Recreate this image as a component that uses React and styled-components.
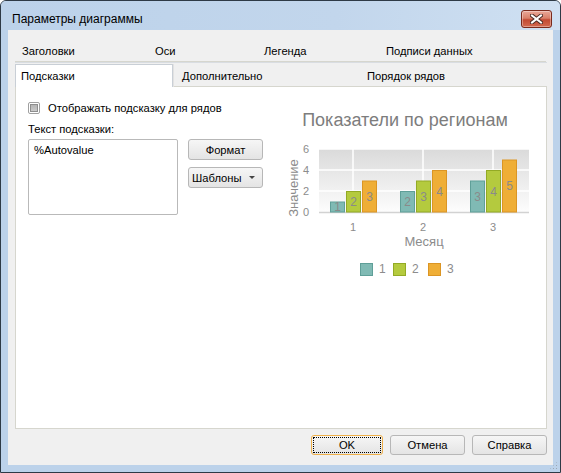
import React from 'react';
import styled, { createGlobalStyle } from 'styled-components';

const GlobalStyle = createGlobalStyle`
  html, body {
    margin: 0;
    padding: 0;
    background: #ffffff;
  }
  body {
    font-family: "Liberation Sans", Arial, sans-serif;
    font-size: 11.2px;
    color: #000;
  }
`;

const Window = styled.div`
  width: 561px;
  height: 473px;
  box-sizing: border-box;
  border: 1px solid #2e3a46;
  border-radius: 6px 6px 0 0;
  background: #bcd2ea;
  display: flex;
  flex-direction: column;
  overflow: hidden;
`;

const TitleBar = styled.div`
  height: 29px;
  box-sizing: border-box;
  padding: 7px 8px 0 11px;
  display: flex;
  align-items: center;
  justify-content: space-between;
  background: linear-gradient(90deg, #bcd2ea 0%, #c2d6ec 60%, #cfe0f2 100%);
`;

const Caption = styled.div`
  font-size: 12px;
  color: #000;
`;

const CloseButton = styled.div`
  width: 29px;
  height: 16px;
  border: 1px solid #7a2a1c;
  border-radius: 3px;
  background: linear-gradient(#eaa898 0%, #d98069 45%, #c24a33 55%, #d36a50 100%);
  box-shadow: inset 0 0 0 1px rgba(255, 255, 255, 0.35);
  display: flex;
  align-items: center;
  justify-content: center;
`;

const Frame = styled.div`
  flex: 1;
  padding: 0 7px 7px 7px;
  display: flex;
  position: relative;
`;

const Client = styled.div`
  flex: 1;
  background: #f0f0f0;
  padding: 10px 6px 10px 7px;
  display: flex;
  flex-direction: column;
`;

const TabRow = styled.div`
  display: flex;
  height: ${p => p.h}px;
  box-sizing: border-box;
  border-bottom: ${p => (p.line ? '1px solid #d9dde2' : 'none')};
  margin-top: ${p => p.mt || 0}px;
`;

const Tab = styled.div`
  width: ${p => p.w}px;
  box-sizing: border-box;
  padding-left: ${p => p.pl}px;
  display: flex;
  align-items: center;
  white-space: nowrap;
  color: #000;
  ${p =>
    p.active
      ? `
    background: #fff;
    border: 1px solid #c9cfd6;
    border-bottom: none;
    box-shadow: 1px 0 0 #e2e2e2;
    position: relative;
    z-index: 1;
  `
      : `
    border-bottom: 1px solid #d6d6ce;
    padding-top: 1px;
  `}
`;

const Panel = styled.div`
  height: 342px;
  box-sizing: border-box;
  background: #fff;
  border: 1px solid #d6d6ce;
  border-top: none;
  padding: 15px 0 0 12px;
  display: flex;
`;

const LeftColumn = styled.div`
  width: 252px;
  display: flex;
  flex-direction: column;
`;

const CheckRow = styled.label`
  display: flex;
  align-items: center;
  height: 12px;
  margin-bottom: 7px;
`;

const CheckBox = styled.span`
  width: 12px;
  height: 12px;
  box-sizing: border-box;
  border: 1px solid #a0a0a0;
  border-radius: 2px;
  background: #fff;
  padding: 1px;
  display: flex;
  margin-right: 8px;

  &::after {
    content: '';
    flex: 1;
    border: 1px solid #8e8e8e;
    background: linear-gradient(#b4b4b4, #cacaca);
  }
`;

const FieldLabel = styled.div`
  height: 16px;
  line-height: 16px;
  margin-bottom: 2px;
`;

const FieldRow = styled.div`
  display: flex;
  align-items: flex-start;
  gap: 10px;
`;

const TextBox = styled.div`
  width: 150px;
  height: 76px;
  box-sizing: border-box;
  border: 1px solid #b9b9b9;
  border-radius: 2px;
  padding: 2px 5px;
  line-height: 16px;
`;

const ButtonStack = styled.div`
  display: flex;
  flex-direction: column;
  gap: 7px;
`;

const Button = styled.div`
  width: ${p => p.w}px;
  height: ${p => p.h || 21}px;
  box-sizing: border-box;
  border: 1px solid ${p => (p.primary ? '#efb049' : '#b7b7b7')};
  border-radius: 3px;
  background: linear-gradient(#f6f6f6 0%, #ededed 50%, #e4e4e4 100%);
  display: flex;
  align-items: center;
  justify-content: ${p => (p.left ? 'space-between' : 'center')};
  padding: ${p => (p.left ? '0 7px 0 3px' : '0')};
  color: #000;
  position: relative;

  ${p =>
    p.primary &&
    `
    &::after {
      content: '';
      position: absolute;
      inset: 1px;
      border: 1px dotted #000;
    }
  `}
`;

const Arrow = styled.span`
  width: 0;
  height: 0;
  border-left: 3px solid transparent;
  border-right: 3px solid transparent;
  border-top: 3px solid #444;
`;

const Footer = styled.div`
  display: flex;
  justify-content: flex-end;
  gap: 7px;
  margin-top: 6px;
`;

const Grip = styled.div`
  position: absolute;
  right: 2px;
  bottom: 2px;
  width: 9px;
  height: 9px;
  background-image: radial-gradient(circle, #9aa6b3 0.9px, transparent 1px);
  background-size: 3px 3px;
  clip-path: polygon(100% 0, 100% 100%, 0 100%);
`;

const series = [
  { fill: '#80bab4', stroke: '#5f9f98', values: [1, 2, 3] },
  { fill: '#b4ca3e', stroke: '#93aa25', values: [2, 3, 4] },
  { fill: '#efae36', stroke: '#db9524', values: [3, 4, 5] },
];

const centers = [73, 143, 213];
const offsets = [-23, -7, 9];
const base = 111;
const unit = 10.5;
const chartFont = 'Liberation Sans, Arial, sans-serif';

function Chart() {
  return (
    <svg width="262" height="190" viewBox="0 0 262 190" style={{ marginTop: -1 }}>
      <defs>
        <linearGradient id="plotBg" x1="0" y1="0" x2="0" y2="1">
          <stop offset="0" stopColor="#dadada" />
          <stop offset="1" stopColor="#fdfdfd" />
        </linearGradient>
      </defs>
      <text x="125" y="25" textAnchor="middle" fontSize="18" fill="#7d7d7d"
        fontFamily={chartFont}>Показатели по регионам</text>

      <rect x="39" y="48" width="210" height="63" fill="url(#plotBg)" />
      {[48, 69, 90].map(y => (
        <line key={y} x1="39" x2="249" y1={y} y2={y} stroke="#fff" strokeWidth="1.5" />
      ))}
      {centers.map(x => (
        <line key={x} x1={x} x2={x} y1="48" y2="111" stroke="#fff" strokeWidth="1.5" />
      ))}
      <line x1="39" x2="249" y1="111.5" y2="111.5" stroke="#d2d2d2" strokeWidth="1.5" />

      {[['6', 48], ['4', 69], ['2', 90], ['0', 111]].map(([t, y]) => (
        <text key={t} x="26" y={y + 4} textAnchor="middle" fontSize="11" fill="#8c8c8c"
          fontFamily={chartFont}>{t}</text>
      ))}
      <text x="0" y="0" transform="translate(18 87) rotate(-90)" textAnchor="middle" fontSize="13"
        fill="#8c8c8c" fontFamily={chartFont}>Значение</text>

      {series.map((s, si) =>
        s.values.map((v, ci) => {
          const x = centers[ci] + offsets[si];
          const h = v * unit;
          return (
            <g key={si + '-' + ci}>
              <rect x={x + 0.5} y={base - h + 0.5} width="14" height={h - 0.5}
                fill={s.fill} stroke={s.stroke} strokeWidth="1" />
              <text x={x + 7.5} y={base - h / 2 + 4.5} textAnchor="middle" fontSize="12"
                fill="#8a8a8a" fontFamily={chartFont}>{v}</text>
            </g>
          );
        })
      )}

      {centers.map((x, i) => (
        <text key={x} x={x} y="130" textAnchor="middle" fontSize="11" fill="#8c8c8c"
          fontFamily={chartFont}>{i + 1}</text>
      ))}
      <text x="144" y="145" textAnchor="middle" fontSize="13" fill="#8c8c8c"
        fontFamily={chartFont}>Месяц</text>

      {series.map((s, i) => {
        const x = [80, 113, 148][i];
        return (
          <g key={i}>
            <rect x={x + 0.5} y="162.5" width="12" height="12" fill={s.fill} stroke={s.stroke} />
            <text x={x + 19} y="172" fontSize="12" fill="#8c8c8c"
              fontFamily={chartFont}>{i + 1}</text>
          </g>
        );
      })}
    </svg>
  );
}

export default function App() {
  return (
    <>
      <GlobalStyle />
      <Window>
        <TitleBar>
          <Caption>Параметры диаграммы</Caption>
          <CloseButton>
            <svg width="13" height="10" viewBox="0 0 13 10">
              <path d="M2 1.5 L11 8.5 M11 1.5 L2 8.5" stroke="#4a2a24" strokeWidth="4" strokeLinecap="square" />
              <path d="M2 1.5 L11 8.5 M11 1.5 L2 8.5" stroke="#fff" strokeWidth="2" strokeLinecap="square" />
            </svg>
          </CloseButton>
        </TitleBar>
        <Frame>
          <Client>
            <TabRow h={23} line>
              <Tab w={133} pl={7}>Заголовки</Tab>
              <Tab w={109} pl={7}>Оси</Tab>
              <Tab w={122} pl={7}>Легенда</Tab>
              <Tab w={167} pl={7}>Подписи данных</Tab>
            </TabRow>
            <TabRow h={23} mt={1}>
              <Tab w={158} pl={5} active>Подсказки</Tab>
              <Tab w={187} pl={9}>Дополнительно</Tab>
              <Tab w={187} pl={7}>Порядок рядов</Tab>
            </TabRow>
            <Panel>
              <LeftColumn>
                <CheckRow>
                  <CheckBox />
                  Отображать подсказку для рядов
                </CheckRow>
                <FieldLabel>Текст подсказки:</FieldLabel>
                <FieldRow>
                  <TextBox>%Autovalue</TextBox>
                  <ButtonStack>
                    <Button w={75}>Формат</Button>
                    <Button w={75} left>
                      Шаблоны
                      <Arrow />
                    </Button>
                  </ButtonStack>
                </FieldRow>
              </LeftColumn>
              <Chart />
            </Panel>
            <Footer>
              <Button w={72} h={20} primary>OK</Button>
              <Button w={75} h={20}>Отмена</Button>
              <Button w={75} h={20}>Справка</Button>
            </Footer>
          </Client>
          <Grip />
        </Frame>
      </Window>
    </>
  );
}
